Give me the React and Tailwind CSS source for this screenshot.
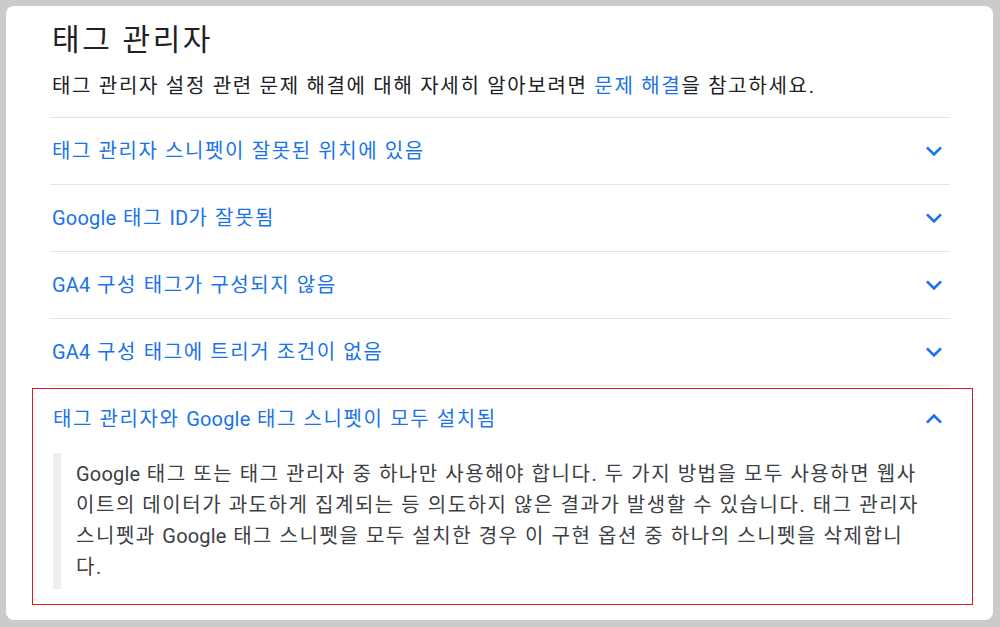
const items = [
  "태그 관리자 스니펫이 잘못된 위치에 있음",
  "Google 태그 ID가 잘못됨",
  "GA4 구성 태그가 구성되지 않음",
  "GA4 구성 태그에 트리거 조건이 없음",
];

// latin runs get tighter spacing than the hangul around them
function T({ children }) {
  return children.split(/([A-Za-z0-9]+)/).map((part, i) =>
    /^[A-Za-z0-9]+$/.test(part) ? (
      <span key={i} className="tracking-[0.2px]">
        {part}
      </span>
    ) : (
      part
    ),
  );
}

function Chevron({ up }) {
  return (
    <svg viewBox="0 0 24 24" className="h-8 w-8 shrink-0 fill-[#1a73e8]">
      {up ? (
        <path d="M12 8l-6 6 1.41 1.41L12 10.83l4.59 4.58L18 14z" />
      ) : (
        <path d="M16.59 8.59L12 13.17 7.41 8.59 6 10l6 6 6-6z" />
      )}
    </svg>
  );
}

export default function App() {
  return (
    <div
      className="min-h-[627px] bg-[#cbcbcb] p-[6px] pb-[7px]"
      style={{ fontFamily: 'Roboto, "Noto Sans CJK KR", sans-serif' }}
    >
      <div className="h-[614px] w-[987px] rounded-lg bg-white pl-[44px] pt-[14px]">
        <div className="w-[900px]">
          <h1 className="pl-[2px] text-[30px] leading-[40px] tracking-[2.6px] text-[#202124]">태그 관리자</h1>
          <p className="mt-[11px] pl-[2px] text-[20px] leading-[30px] tracking-[1.7px] text-[#202124]">
            태그 관리자 설정 관련 문제 해결에 대해 자세히 알아보려면{" "}
            <span className="text-[#1a73e8]">문제 해결</span>을 참고하세요.
          </p>

          <div className="mt-[16px]">
            {items.map((t) => (
              <div
                key={t}
                className="flex h-[67px] items-center justify-between border-t border-[#e4e4e4] pl-[2px] text-[20px] tracking-[1.6px] text-[#1a73e8]"
              >
                <span>
                  <T>{t}</T>
                </span>
                <Chevron />
              </div>
            ))}

            <div className="border-t border-[#e4e4e4]">
              <div className="mt-[2px] -ml-[18px] -mr-[23px] border border-[#e0191e] pl-[20px] pr-[22px] pb-[15px]">
                <div className="flex h-[60px] items-center justify-between text-[20px] tracking-[1.6px] text-[#1a73e8]">
                  <span>
                    <T>태그 관리자와 Google 태그 스니펫이 모두 설치됨</T>
                  </span>
                  <Chevron up />
                </div>
                <div className="mt-[4px] border-l-[8px] border-[#eeeeee] py-[6px] pl-[15px] text-[20px] leading-[31px] tracking-[1.55px] text-[#3c4043]">
                  <span className="whitespace-nowrap">
                    <T>Google 태그 또는 태그 관리자 중 하나만 사용해야 합니다. 두 가지 방법을 모두 사용하면 웹사</T>
                  </span>
                  <br />
                  <span className="whitespace-nowrap">
                    이트의 데이터가 과도하게 집계되는 등 의도하지 않은 결과가 발생할 수 있습니다. 태그 관리자
                  </span>
                  <br />
                  <span className="whitespace-nowrap">
                    <T>스니펫과 Google 태그 스니펫을 모두 설치한 경우 이 구현 옵션 중 하나의 스니펫을 삭제합니</T>
                  </span>
                  <br />
                  다.
                </div>
              </div>
            </div>
          </div>
        </div>
      </div>
    </div>
  );
}
